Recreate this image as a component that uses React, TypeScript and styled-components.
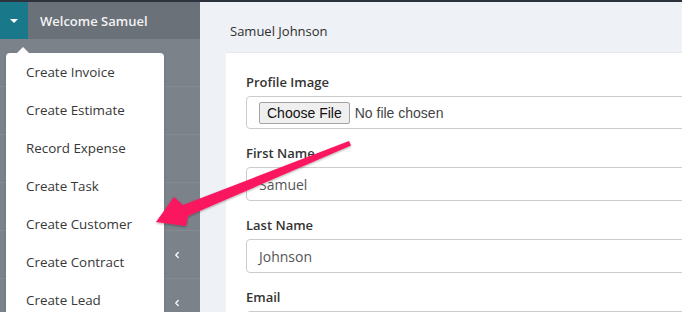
import React from 'react';
import styled, { createGlobalStyle } from 'styled-components';
import { ChevronLeft } from 'lucide-react';

const GlobalStyle = createGlobalStyle`
  html, body {
    margin: 0;
    padding: 0;
    height: 312px;
    overflow: hidden;
    font-family: 'Open Sans', 'Liberation Sans', sans-serif;
  }
  * { box-sizing: border-box; }
`;

const Page = styled.div`
  position: relative;
  width: 682px;
  height: 312px;
  overflow: hidden;
  display: flex;
  flex-direction: column;
`;

const TopLine = styled.div`
  height: 2px;
  background: #2c333c;
  flex-shrink: 0;
`;

const Body = styled.div`
  flex: 1;
  display: flex;
  min-height: 0;
`;

const Sidebar = styled.aside`
  position: relative;
  width: 200px;
  flex-shrink: 0;
  background: #7b8289;
  display: flex;
  flex-direction: column;
  overflow: hidden;
`;

const SideHeader = styled.div`
  height: 37px;
  flex-shrink: 0;
  display: flex;
  align-items: center;
  background: #6b7178;
`;

const Toggle = styled.div`
  width: 28px;
  height: 100%;
  background: #19798b;
  display: flex;
  align-items: center;
  justify-content: center;
`;

const Caret = styled.span`
  width: 0;
  height: 0;
  border-left: 4px solid transparent;
  border-right: 4px solid transparent;
  border-top: 4px solid #ffffff;
  margin-top: 1px;
`;

const Welcome = styled.span`
  padding-left: 12px;
  color: #f2f3f4;
  font-size: 13px;
  font-weight: 600;
`;

const NavRow = styled.div`
  height: 48px;
  flex-shrink: 0;
  border-bottom: 1px solid #848b92;
  display: flex;
  align-items: center;
  justify-content: flex-end;
  padding-right: 18px;
  color: #ffffff;
`;

const Menu = styled.ul`
  position: absolute;
  top: 51px;
  left: 6px;
  width: 158px;
  height: 300px;
  margin: 0;
  padding: 0;
  list-style: none;
  background: #ffffff;
  border-radius: 4px;
  box-shadow: 0 1px 3px rgba(0, 0, 0, 0.15);

  &::before {
    content: '';
    position: absolute;
    top: -6px;
    left: 11px;
    border-left: 6px solid transparent;
    border-right: 6px solid transparent;
    border-bottom: 6px solid #ffffff;
  }
`;

const MenuItem = styled.li`
  height: 38px;
  display: flex;
  align-items: center;
  padding-left: 20px;
  font-size: 13.4px;
  color: #383838;
`;

const Main = styled.main`
  flex: 1;
  min-width: 0;
  background: #eef1f5;
  padding-left: 26px;
  overflow: hidden;
`;

const Title = styled.h1`
  margin: 20px 0 12px 4px;
  font-size: 13px;
  line-height: 18px;
  font-weight: 400;
  color: #2e2e2e;
`;

const Card = styled.section`
  width: 620px;
  background: #ffffff;
  padding: 20px;
  border-top: 1px solid #e4e8ec;
`;

const Field = styled.div`
  margin-bottom: 15px;
`;

const Label = styled.label`
  display: block;
  font-size: 13px;
  line-height: 18px;
  font-weight: 600;
  color: #333333;
  margin-bottom: 5px;
`;

const Input = styled.div<{ $h?: number }>`
  height: ${p => p.$h ?? 34}px;
  border: 1px solid #cccccc;
  border-radius: 4px;
  display: flex;
  align-items: center;
  gap: 5px;
  padding: 0 12px;
  font-size: 14px;
  color: #555555;
`;

const FileButton = styled.span`
  height: 22px;
  padding: 0 7px;
  display: flex;
  align-items: center;
  font-family: 'Liberation Sans', Arial, sans-serif;
  font-size: 14px;
  color: #111111;
  background: #efefef;
  border: 1px solid #a3a3a3;
  border-radius: 2px;
`;

const FileText = styled.span`
  font-family: 'Liberation Sans', Arial, sans-serif;
  font-size: 14px;
  color: #444444;
`;

const Overlay = styled.svg`
  position: absolute;
  left: 0;
  top: 0;
  pointer-events: none;
`;

const menuItems = [
  'Create Invoice',
  'Create Estimate',
  'Record Expense',
  'Create Task',
  'Create Customer',
  'Create Contract',
  'Create Lead',
];

const navRows = [false, false, false, false, true, true];

const fields = [
  { label: 'First Name', value: 'Samuel' },
  { label: 'Last Name', value: 'Johnson' },
  { label: 'Email', value: '' },
];

export default function App() {
  return (
    <>
      <GlobalStyle />
      <Page>
        <TopLine />
        <Body>
          <Sidebar>
            <SideHeader>
              <Toggle>
                <Caret />
              </Toggle>
              <Welcome>Welcome Samuel</Welcome>
            </SideHeader>
            {navRows.map((chev, i) => (
              <NavRow key={i}>
                {chev && <ChevronLeft size={10} strokeWidth={3} />}
              </NavRow>
            ))}
            <Menu>
              {menuItems.map(t => (
                <MenuItem key={t}>{t}</MenuItem>
              ))}
            </Menu>
          </Sidebar>
          <Main>
            <Title>Samuel Johnson</Title>
            <Card>
              <Field>
                <Label>Profile Image</Label>
                <Input $h={33}>
                  <FileButton>Choose File</FileButton>
                  <FileText>No file chosen</FileText>
                </Input>
              </Field>
              {fields.map(f => (
                <Field key={f.label}>
                  <Label>{f.label}</Label>
                  <Input>{f.value}</Input>
                </Field>
              ))}
            </Card>
          </Main>
        </Body>
        <Overlay width="682" height="312" viewBox="0 0 682 312">
          <defs>
            <filter id="sh" x="-10%" y="-10%" width="120%" height="130%">
              <feDropShadow dx="0" dy="1" stdDeviation="1.2" floodColor="#000" floodOpacity="0.35" />
            </filter>
          </defs>
          <polygon
            points="349,141 351,145.5 188,216 186,226 156,222 174,197 183,205"
            fill="#fb1660"
            filter="url(#sh)"
          />
        </Overlay>
      </Page>
    </>
  );
}
